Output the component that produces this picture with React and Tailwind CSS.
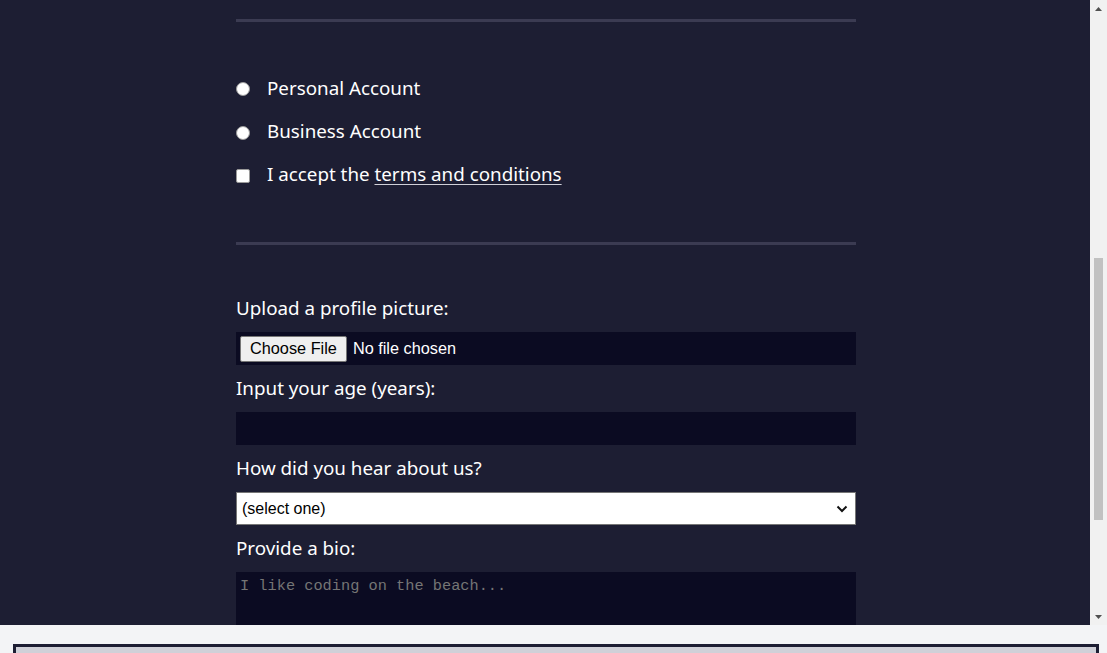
import React from "react";

const labelCls =
  "block h-[24px] leading-[24px] mb-[12px] text-[18.8px] text-white font-['Noto_Sans',sans-serif]";

const Field = ({ label, children }) => (
  <div className="mb-[11px]">
    <label className={labelCls}>{label}</label>
    {children}
  </div>
);

const ScrollBar = () => (
  <div className="w-[17px] h-full bg-[#f1f1f1] flex flex-col items-center">
    <div className="h-[17px] flex items-center justify-center">
      <svg width="7" height="4" viewBox="0 0 7 4">
        <path d="M0 4 L3.5 0 L7 4 Z" fill="#505050" />
      </svg>
    </div>
    <div className="h-[241px]" />
    <div className="w-[9px] h-[262px] bg-[#c1c1c1]" />
    <div className="flex-1" />
    <div className="h-[17px] flex items-center justify-center">
      <svg width="7" height="4" viewBox="0 0 7 4">
        <path d="M0 0 L3.5 4 L7 0 Z" fill="#505050" />
      </svg>
    </div>
  </div>
);

export default function App() {
  return (
    <div className="w-[1107px] h-[653px] overflow-hidden flex flex-col bg-[#f3f4f6]">
      <div className="h-[625px] flex">
        <div className="flex-1 bg-[#1d1e33] overflow-hidden">
          <div className="w-[620px] ml-[236px] pt-[19px] font-['Noto_Sans',sans-serif] text-white">
            <div className="h-[3px] bg-[#3b3b52]" />

            {/* account type + terms */}
            <div className="mt-[44px] text-[18.8px]">
              <label className="h-[44px] flex items-center gap-[17px]">
                <span className="w-[14px] h-[14px] mt-[2px] rounded-full bg-white border border-[#9a9a9a]" />
                Personal Account
              </label>
              <label className="h-[43px] flex items-center gap-[17px]">
                <span className="w-[14px] h-[14px] mt-[2px] rounded-full bg-white border border-[#9a9a9a]" />
                Business Account
              </label>
              <label className="h-[43px] flex items-center gap-[17px]">
                <span className="w-[14px] h-[14px] mt-[2px] rounded-[2px] bg-white border border-[#9a9a9a]" />
                <span>
                  I accept the{" "}
                  <a className="underline decoration-[#d0d0d8] underline-offset-[3px]">
                    terms and conditions
                  </a>
                </span>
              </label>
            </div>

            <div className="h-[3px] bg-[#3b3b52] mt-[46px]" />

            <div className="mt-[51px]">
              <Field label="Upload a profile picture:">
                <div className="h-[33px] bg-[#0b0b22] flex items-center pl-[4px] gap-[6px] font-['Liberation_Sans',Arial,sans-serif] text-[16.3px]">
                  <span className="h-[26px] px-[9px] flex items-center bg-[#efefef] border border-[#767676] rounded-[2px] text-black">
                    Choose File
                  </span>
                  <span className="text-white">No file chosen</span>
                </div>
              </Field>

              <Field label="Input your age (years):">
                <div className="h-[33px] bg-[#0b0b22]" />
              </Field>

              <Field label="How did you hear about us?">
                <div className="h-[33px] bg-white border border-[#767676] flex items-center justify-between pl-[5px] pr-[7px] font-['Liberation_Sans',Arial,sans-serif] text-[16px] text-black">
                  <span>(select one)</span>
                  <svg width="12" height="8" viewBox="0 0 12 8">
                    <path d="M1.5 1.5 L6 6 L10.5 1.5" stroke="#111" strokeWidth="2" fill="none" />
                  </svg>
                </div>
              </Field>

              <Field label="Provide a bio:">
                <div className="h-[80px] bg-[#0b0b22] px-[4px] pt-[4px] font-['Liberation_Mono',monospace] text-[15.3px] leading-[20px] text-[#757575]">
                  I like coding on the beach...
                </div>
              </Field>
            </div>
          </div>
        </div>
        <ScrollBar />
      </div>
      <div className="flex-1 pt-[19px] pl-[13px] pr-[8px]">
        <div className="h-[20px] border-[3px] border-[#1d1e33] bg-[#d0d0d8]" />
      </div>
    </div>
  );
}
